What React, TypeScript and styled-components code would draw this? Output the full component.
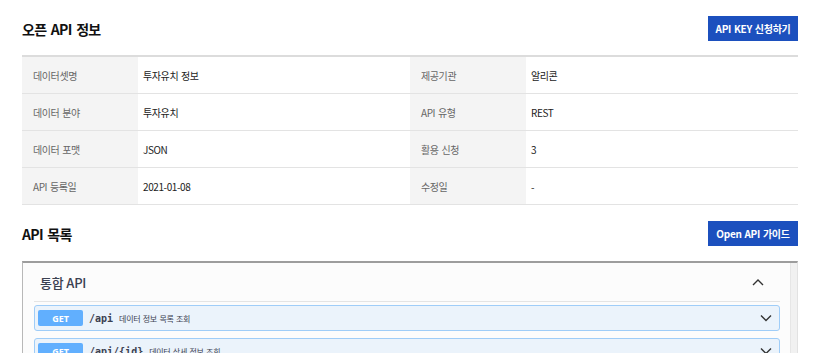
import React from "react";
import styled, { createGlobalStyle } from "styled-components";

const GlobalStyle = createGlobalStyle`
  body {
    margin: 0;
    background: #fff;
    font-family: "Noto Sans CJK KR", "Noto Sans", sans-serif;
    color: #333;
  }
`;

const info = [
  ["데이터셋명", "투자유치 정보", "제공기관", "알리콘"],
  ["데이터 분야", "투자유치", "API 유형", "REST"],
  ["데이터 포맷", "JSON", "활용 신청", "3"],
  ["API 등록일", "2021-01-08", "수정일", "-"],
];

const ops = [
  { path: "/api", desc: "데이터 정보 목록 조회" },
  { path: "/api/{id}", desc: "데이터 상세 정보 조회" },
];

const Chevron = ({ up }: { up?: boolean }) => (
  <svg width="12" height="8" viewBox="0 0 12 8">
    <path
      d={up ? "M1 7 L6 2 L11 7" : "M1 1.5 L6 6.5 L11 1.5"}
      fill="none"
      stroke="#333"
      strokeWidth="1.4"
    />
  </svg>
);

const App = () => {
  return (
    <Page>
      <GlobalStyle />
      <SectionHead>
        <Title>오픈 API 정보</Title>
        <BlueButton>API KEY 신청하기</BlueButton>
      </SectionHead>
      <InfoTable>
        {info.map((row) => (
          <Row key={row[0]}>
            <Label>{row[0]}</Label>
            <Value>{row[1]}</Value>
            <Label>{row[2]}</Label>
            <Value>{row[3]}</Value>
          </Row>
        ))}
      </InfoTable>

      <SectionHead $top={16}>
        <Title>API 목록</Title>
        <BlueButton>Open API 가이드</BlueButton>
      </SectionHead>
      <Frame>
        <FrameInner>
          <TagHead>
            <TagTitle>통합 API</TagTitle>
            <Chevron up />
          </TagHead>
          {ops.map((op) => (
            <OpBlock key={op.path}>
              <Method>GET</Method>
              <Path>{op.path}</Path>
              <Desc>{op.desc}</Desc>
              <Spacer />
              <Chevron />
            </OpBlock>
          ))}
        </FrameInner>
        <ScrollTrack />
      </Frame>
    </Page>
  );
};

export default App;

const Page = styled.div`
  padding: 0 22px;
  height: 353px;
  overflow: hidden;
`;

const SectionHead = styled.div<{ $top?: number }>`
  display: flex;
  align-items: center;
  justify-content: space-between;
  padding-top: ${(p) => p.$top ?? 16}px;
`;

const Title = styled.h2`
  margin: 0;
  font-size: 14px;
  font-weight: 700;
  letter-spacing: -0.7px;
  word-spacing: 2px;
  color: #111;
`;

const BlueButton = styled.button`
  height: 25px;
  width: 90px;
  border: none;
  background-color: #1c50be;
  color: #fff;
  font-family: inherit;
  font-size: 10px;
  font-weight: 700;
  letter-spacing: -0.3px;
  word-spacing: 1px;
  padding: 0;
  cursor: pointer;
`;

const InfoTable = styled.div`
  margin-top: 14px;
  border-top: 2px solid #dcdcdc;
`;

const Row = styled.div`
  display: grid;
  grid-template-columns: 116px 272px 116px 1fr;
  height: 36px;
  border-bottom: 1px solid #e3e3e3;
`;

const Label = styled.div`
  display: flex;
  align-items: center;
  padding-left: 11px;
  background: #f4f4f4;
  font-size: 10px;
  letter-spacing: -0.4px;
  word-spacing: 1px;
  color: #666;
`;

const Value = styled.div`
  display: flex;
  align-items: center;
  padding-left: 5px;
  font-size: 10px;
  letter-spacing: -0.4px;
  word-spacing: 1px;
  color: #222;
`;

const Frame = styled.div`
  display: flex;
  margin-top: 15px;
  height: 120px;
  border-style: solid;
  border-width: 2px 1px 0 1px;
  border-color: #9d9d9d #e2e2e2 #e2e2e2 #b8b8b8;
  background: #fcfcfc;
`;

const FrameInner = styled.div`
  flex: 1;
  padding: 0 10px 0 11px;
`;

const ScrollTrack = styled.div`
  width: 6px;
  background: #f1f1f1;
  border-left: 1px solid #e6e6e6;
`;

const TagHead = styled.div`
  display: flex;
  align-items: center;
  justify-content: space-between;
  height: 38px;
  padding: 0 16px 0 6px;
  border-bottom: 1px solid #e4e4e4;
`;

const TagTitle = styled.h3`
  margin: 0;
  font-size: 13px;
  font-weight: 500;
  color: #3b4151;
  letter-spacing: -0.2px;
`;

const OpBlock = styled.div`
  display: flex;
  align-items: center;
  height: 24px;
  margin-top: 3px;
  margin-bottom: 7px;
  padding: 0 7px 0 3px;
  background: #ebf3fb;
  border: 1px solid #9fcdf8;
  border-radius: 3px;
`;

const Method = styled.span`
  display: flex;
  align-items: center;
  justify-content: center;
  width: 45px;
  height: 16px;
  background: #61affe;
  border-radius: 2px;
  color: #fff;
  font-family: "Noto Sans", sans-serif;
  font-size: 9px;
  font-weight: 700;
`;

const Path = styled.span`
  margin-left: 6px;
  font-family: "DejaVu Sans Mono", monospace;
  font-size: 10px;
  font-weight: 700;
  color: #3b4151;
`;

const Desc = styled.span`
  margin-left: 6px;
  font-size: 8px;
  color: #3b4151;
  letter-spacing: -0.3px;
  word-spacing: 1px;
`;

const Spacer = styled.div`
  flex: 1;
`;
